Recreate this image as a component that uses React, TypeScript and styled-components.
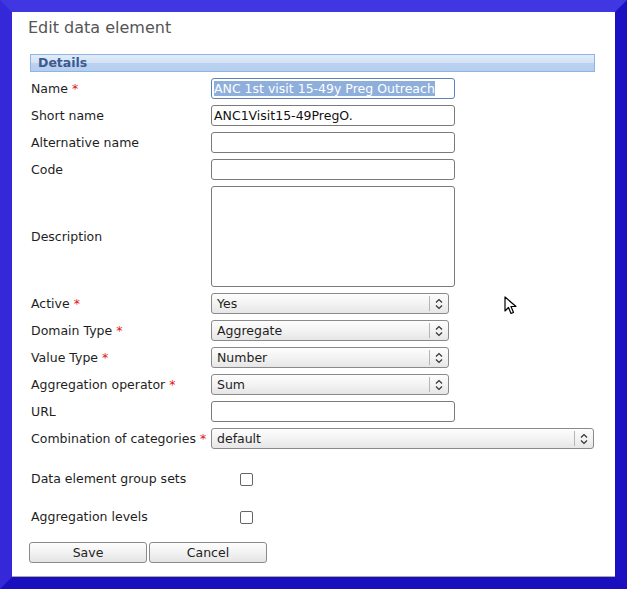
import React from "react";
import styled, { createGlobalStyle } from "styled-components";

const Global = createGlobalStyle`
  html, body { margin: 0; padding: 0; background: #fff; }
  body { font-family: "DejaVu Sans", Verdana, sans-serif; }
  * { box-sizing: border-box; }
`;

const Frame = styled.div`
  position: relative;
  width: 627px;
  height: 589px;
  border-style: solid;
  border-width: 12px 12px 12px 12px;
  border-color: #4037e2 #1b10c2 #1a0fbf #3428d8;
  background: #fff;
  box-shadow: inset 0 -1px 0 #a8a8a8;
  padding: 6px 0 0 0;
  font-family: "DejaVu Sans", Verdana, sans-serif;
  font-size: 12.5px;
  color: #222;
`;

const Title = styled.h1`
  margin: 0 0 16px 16px;
  font-size: 16px;
  line-height: 20px;
  font-weight: normal;
  color: #555;
`;

const SectionHeader = styled.div`
  margin-left: 18px;
  width: 565px;
  height: 18px;
  border: 1px solid #8db6e6;
  background: linear-gradient(#e2ecf8, #d4e2f5 50%, #bcd2f0 50%, #b6cdee);
  padding-left: 7px;
  font-weight: bold;
  font-size: 12.5px;
  line-height: 16px;
  color: #3b5a90;
`;

const FormGrid = styled.div`
  margin: 6px 0 0 19px;
  display: grid;
  grid-template-columns: 180px auto;
  row-gap: 6px;
  align-items: center;
  justify-items: start;
`;

const Label = styled.label`
  line-height: 16px;
  white-space: nowrap;
  color: #1e1e1e;
`;

const Req = styled.span`
  color: #e21414;
  margin-left: 4px;
`;

const TextBox = styled.div<{ $focused?: boolean }>`
  width: 244px;
  height: 21px;
  border: 1px solid ${(p) => (p.$focused ? "#5f82b6" : "#7a7a7a")};
  border-radius: 3px;
  background: #fff;
  padding: 1px 2px;
  line-height: 17px;
  white-space: nowrap;
  overflow: hidden;
  color: #111;
`;

const Selected = styled.span`
  background: #8eaedb;
  color: #fff;
`;

const TextArea = styled.div`
  width: 244px;
  height: 101px;
  border: 1px solid #7a7a7a;
  border-radius: 3px;
  background: #fff;
`;

const SelectBox = styled.div<{ $wide?: boolean }>`
  position: relative;
  width: ${(p) => (p.$wide ? "383px" : "238px")};
  height: 21px;
  border: 1px solid #8a8a8a;
  border-radius: 3px;
  background: linear-gradient(#fdfdfd, #f3f3f3 50%, #e6e6e6);
  padding: 0 24px 0 5px;
  line-height: 19px;
  color: #1e1e1e;
`;

const SelectArrow = styled.span`
  position: absolute;
  right: 0;
  top: 2px;
  bottom: 2px;
  width: 19px;
  border-left: 1px solid #b5b5b5;
  display: flex;
  align-items: center;
  justify-content: center;
`;

const CheckGrid = styled.div`
  margin: 11px 0 0 19px;
  display: grid;
  grid-template-columns: 180px auto;
  grid-auto-rows: 38px;
  align-items: center;
`;

const CheckBox = styled.span`
  display: block;
  margin-left: 29px;
  width: 13px;
  height: 13px;
  border: 1px solid #666;
  border-radius: 2px;
  background: #fff;
`;

const ButtonBar = styled.div`
  margin: 6px 0 0 17px;
  display: flex;
  gap: 2px;
`;

const Button = styled.button`
  width: 118px;
  height: 21px;
  border: 1px solid #8a8a8a;
  border-radius: 3px;
  background: linear-gradient(#fdfdfd, #f2f2f2 50%, #e4e4e4);
  font-family: "DejaVu Sans", Verdana, sans-serif;
  font-size: 12.5px;
  color: #222;
  padding: 0;
  line-height: 19px;
`;

const Pointer = styled.svg`
  position: absolute;
  left: 492px;
  top: 284px;
`;

const Chevrons = () => (
  <svg width="8" height="12" viewBox="0 0 8 12">
    <path d="M1 4.5 L4 1.5 L7 4.5 M1 7.5 L4 10.5 L7 7.5" fill="none" stroke="#333" strokeWidth="1.2" />
  </svg>
);

const Select = ({ value, wide }: { value: string; wide?: boolean }) => (
  <SelectBox $wide={wide}>
    {value}
    <SelectArrow>
      <Chevrons />
    </SelectArrow>
  </SelectBox>
);

type Row = { label: string; req?: boolean; control: React.ReactNode };

const rows: Row[] = [
  {
    label: "Name",
    req: true,
    control: (
      <TextBox $focused>
        <Selected>ANC 1st visit 15-49y Preg Outreach</Selected>
      </TextBox>
    ),
  },
  { label: "Short name", control: <TextBox>ANC1Visit15-49PregO.</TextBox> },
  { label: "Alternative name", control: <TextBox /> },
  { label: "Code", control: <TextBox /> },
  { label: "Description", control: <TextArea /> },
  { label: "Active", req: true, control: <Select value="Yes" /> },
  { label: "Domain Type", req: true, control: <Select value="Aggregate" /> },
  { label: "Value Type", req: true, control: <Select value="Number" /> },
  { label: "Aggregation operator", req: true, control: <Select value="Sum" /> },
  { label: "URL", control: <TextBox /> },
  { label: "Combination of categories", req: true, control: <Select value="default" wide /> },
];

export default function App() {
  return (
    <>
      <Global />
      <Frame>
        <Title>Edit data element</Title>
        <SectionHeader>Details</SectionHeader>
        <FormGrid>
          {rows.map((r) => (
            <React.Fragment key={r.label}>
              <Label>
                {r.label}
                {r.req && <Req>*</Req>}
              </Label>
              {r.control}
            </React.Fragment>
          ))}
        </FormGrid>
        <CheckGrid>
          <Label>Data element group sets</Label>
          <CheckBox />
          <Label>Aggregation levels</Label>
          <CheckBox />
        </CheckGrid>
        <ButtonBar>
          <Button>Save</Button>
          <Button>Cancel</Button>
        </ButtonBar>
        <Pointer width="14" height="20" viewBox="0 0 14 20">
          <path d="M1 1 L1 15 L4.5 11.5 L7 17.5 L9.5 16.5 L7 10.5 L12 10.5 Z" fill="#fff" stroke="#000" strokeWidth="1.2" strokeLinejoin="round" />
        </Pointer>
      </Frame>
    </>
  );
}
